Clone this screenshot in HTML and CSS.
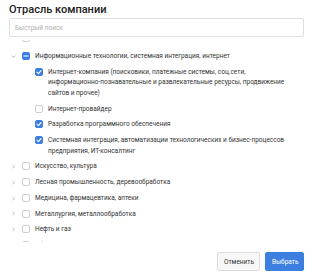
FILE: index.html
```html
<!DOCTYPE html>
<html lang="ru">

<head>
    <meta charset="UTF-8">
    <meta name="viewport" content="width=device-width, initial-scale=1.0">
    <title>Отрасль компании</title>
    <link rel="stylesheet" href="styles.css">
</head>

<body>
    <div class="panel">
        <h1 class="title">Отрасль компании</h1>
        <input class="search" type="text" placeholder="Быстрый поиск">

        <div class="tree">
            <ul class="tree-list">
                <li class="row row-prev">
                    <span class="toggle">
                        <svg viewBox="0 0 6 6"><polyline points="2,1 4,3 2,5" /></svg>
                    </span>
                    <span class="box"></span>
                    <span class="label">ЖКХ</span>
                </li>
                <li>
                    <div class="row">
                        <span class="toggle">
                            <svg viewBox="0 0 6 6"><polyline points="1,2 3,4 5,2" /></svg>
                        </span>
                        <span class="box box-on">
                            <svg viewBox="0 0 8 8"><line x1="2" y1="4" x2="6" y2="4" /></svg>
                        </span>
                        <span class="label">Информационные технологии, системная интеграция, интернет</span>
                    </div>
                    <ul class="sub-list">
                        <li class="row">
                            <span class="toggle"></span>
                            <span class="box box-on">
                                <svg viewBox="0 0 8 8"><polyline points="2,4.2 3.5,5.6 6,2.6" /></svg>
                            </span>
                            <span class="label">Интернет-компания (поисковики, платежные системы, соц.сети, информационно-познавательные и развлекательные ресурсы, продвижение сайтов и прочее)</span>
                        </li>
                        <li class="row">
                            <span class="toggle"></span>
                            <span class="box"></span>
                            <span class="label">Интернет-провайдер</span>
                        </li>
                        <li class="row">
                            <span class="toggle"></span>
                            <span class="box box-on">
                                <svg viewBox="0 0 8 8"><polyline points="2,4.2 3.5,5.6 6,2.6" /></svg>
                            </span>
                            <span class="label">Разработка программного обеспечения</span>
                        </li>
                        <li class="row">
                            <span class="toggle"></span>
                            <span class="box box-on">
                                <svg viewBox="0 0 8 8"><polyline points="2,4.2 3.5,5.6 6,2.6" /></svg>
                            </span>
                            <span class="label">Системная интеграция, автоматизации технологических и бизнес-процессов предприятия, ИТ-консалтинг</span>
                        </li>
                    </ul>
                </li>
                <li class="row">
                    <span class="toggle">
                        <svg viewBox="0 0 6 6"><polyline points="2,1 4,3 2,5" /></svg>
                    </span>
                    <span class="box"></span>
                    <span class="label">Искусство, культура</span>
                </li>
                <li class="row">
                    <span class="toggle">
                        <svg viewBox="0 0 6 6"><polyline points="2,1 4,3 2,5" /></svg>
                    </span>
                    <span class="box"></span>
                    <span class="label">Лесная промышленность, деревообработка</span>
                </li>
                <li class="row">
                    <span class="toggle">
                        <svg viewBox="0 0 6 6"><polyline points="2,1 4,3 2,5" /></svg>
                    </span>
                    <span class="box"></span>
                    <span class="label">Медицина, фармацевтика, аптеки</span>
                </li>
                <li class="row">
                    <span class="toggle">
                        <svg viewBox="0 0 6 6"><polyline points="2,1 4,3 2,5" /></svg>
                    </span>
                    <span class="box"></span>
                    <span class="label">Металлургия, металлообработка</span>
                </li>
                <li class="row">
                    <span class="toggle">
                        <svg viewBox="0 0 6 6"><polyline points="2,1 4,3 2,5" /></svg>
                    </span>
                    <span class="box"></span>
                    <span class="label">Нефть и газ</span>
                </li>
                <li class="row">
                    <span class="toggle">
                        <svg viewBox="0 0 6 6"><polyline points="2,1 4,3 2,5" /></svg>
                    </span>
                    <span class="box"></span>
                    <span class="label">Образование, наука</span>
                </li>
            </ul>
        </div>

        <div class="actions">
            <button class="btn btn-cancel">Отменить</button>
            <button class="btn btn-ok">Выбрать</button>
        </div>
    </div>
</body>

</html>
```

FILE: styles.css
```css
html,
body {
    margin: 0;
    background: #fff;
}

body {
    font-family: "Roboto", "Liberation Sans", Arial, sans-serif;
    color: #333;
}

.panel {
    display: flex;
    flex-direction: column;
    padding: 3px 11px 0 9px;
    height: 278px;
    box-sizing: border-box;
}

.title {
    margin: 0;
    font-size: 11px;
    line-height: 14px;
    font-weight: 500;
    color: #222;
}

.search {
    margin-top: 1px;
    height: 19px;
    box-sizing: border-box;
    border: 1px solid #e0e0e0;
    border-radius: 2px;
    padding: 0 5px;
    font-family: inherit;
    font-size: 6.5px;
    outline: none;
}

.search::placeholder {
    color: #b0b0b0;
}

.tree {
    margin-top: 3px;
    height: 202px;
    overflow: hidden;
}

.tree-list,
.sub-list {
    list-style: none;
    margin: 0;
    padding: 0;
}

.tree-list {
    margin-top: -9.9px;
    padding: 0 14px 0 2px;
}

.sub-list {
    padding-left: 13px;
}

.row {
    display: flex;
    align-items: flex-start;
    padding: 2.625px 0;
    font-size: 6.5px;
    line-height: 10.5px;
}

.row-prev {
    margin-bottom: 2.75px;
}

.toggle {
    flex: none;
    width: 11px;
    height: 10.5px;
    display: flex;
    align-items: center;
}

.toggle svg {
    width: 5px;
    height: 5px;
    fill: none;
    stroke: #999;
    stroke-width: 0.8;
}

.box {
    flex: none;
    width: 8px;
    height: 8px;
    margin-top: 1px;
    margin-right: 5px;
    box-sizing: border-box;
    border: 1px solid #cfcfcf;
    border-radius: 2px;
    background: #fff;
    display: flex;
}

.box-on {
    border-color: #3d7fe0;
    background: #3d7fe0;
}

.box svg {
    margin: -1px;
    width: 8px;
    height: 8px;
    fill: none;
    stroke: #fff;
    stroke-width: 1.1;
    stroke-linecap: round;
    stroke-linejoin: round;
}

.label {
    color: #333;
}

.actions {
    display: flex;
    justify-content: flex-end;
    gap: 5px;
    margin-top: 10px;
}

.btn {
    height: 19px;
    padding: 0 6px;
    border-radius: 2px;
    font-family: inherit;
    font-size: 6.5px;
    cursor: pointer;
}

.btn-cancel {
    width: 43px;
    border: 1px solid #dcdcdc;
    background: #f7f7f7;
    color: #333;
}

.btn-ok {
    width: 39px;
    border: 1px solid #3d7fe0;
    background: #3d7fe0;
    color: #fff;
}
```
